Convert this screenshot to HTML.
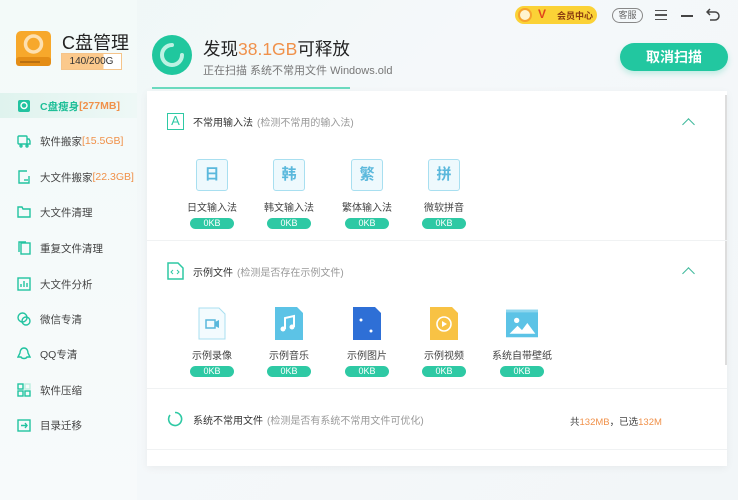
<!DOCTYPE html>
<html><head><meta charset="utf-8"><style>
*{margin:0;padding:0;box-sizing:border-box}
body{width:738px;height:500px;overflow:hidden;background:linear-gradient(135deg,#eef7f6 0%,#f5f8fa 40%,#f2f6f8 100%);font-family:"Liberation Sans","Noto Sans CJK SC",sans-serif;color:#333;position:relative}
.abs{position:absolute}
.side{left:0;top:0;width:137px;height:500px;background:linear-gradient(180deg,#f3faf9,#f7fafb)}
.nav{position:absolute;left:17px;font-size:10.5px;color:#444;display:flex;align-items:center;height:20px}
.nav svg{width:14px;height:14px;margin-right:9px}
.or{color:#f0914a}
.card{left:147px;top:91px;width:580px;height:375px;background:#fff;box-shadow:0 2px 8px rgba(0,0,0,.05)}
.sh{position:absolute;left:20px;display:flex;align-items:center;font-size:10px;color:#333}
.sh .g{color:#999;margin-left:4px}
.chev{position:absolute;left:537px;width:9px;height:9px;border-left:1.6px solid #3db89a;border-top:1.6px solid #3db89a;transform:rotate(45deg)}
.it{position:absolute;width:80px;text-align:center;font-size:10px;color:#444}
.it .ic{margin:0 auto;width:32px;height:34px;display:flex;align-items:center;justify-content:center}
.it .lb{margin-top:10px;height:14px;line-height:14px}
.pill{margin:2px auto 0;width:44px;height:11px;border-radius:6px;background:#2ec9a4;color:#fff;font-size:9px;line-height:11px}
.box{width:32px;height:32px;border:1.5px solid #a8dff0;background:#eef9fd;border-radius:3px;color:#5ab8dc;font-size:15px;font-weight:bold;line-height:29px;text-align:center}
.div{position:absolute;left:0;width:580px;height:1px;background:#f0f2f3}
</style></head><body>
<div class="abs side"></div>
<!-- logo -->
<svg class="abs" style="left:14px;top:29px" width="40" height="40" viewBox="0 0 40 40"><rect x="2" y="2" width="35" height="35" rx="5" fill="#f7a82b"/><rect x="2" y="28" width="35" height="9" rx="3" fill="#e48d16"/><rect x="6" y="32" width="20" height="2" fill="#b96f10"/><circle cx="19.5" cy="15" r="8" fill="none" stroke="#fde0b0" stroke-width="3.5"/></svg>
<div class="abs" style="left:62px;top:29px;font-size:18px;color:#222">C盘管理</div>
<div class="abs" style="left:61px;top:53px;width:61px;height:17px;border:1px solid #f5c48a;background:linear-gradient(90deg,#fbc98c 0 70%,#fff 70%);font-size:10px;line-height:15px;text-align:center;color:#333">140/200G</div>
<!-- spinner -->
<svg class="abs" style="left:151px;top:34px" width="42" height="42" viewBox="0 0 42 42"><circle cx="21" cy="21" r="20" fill="#20c79e"/><path d="M21 11 A10 10 0 1 0 31 21" fill="none" stroke="#bdf2e3" stroke-width="4" stroke-linecap="round"/></svg>
<div class="abs" style="left:203px;top:36px;font-size:17.5px;color:#222">发现<span class="or">38.1GB</span>可释放</div>
<div class="abs" style="left:203px;top:62px;font-size:11px;color:#777">正在扫描 系统不常用文件 Windows.old</div>
<div class="abs" style="left:152px;top:87px;width:198px;height:2px;background:#6cdbc0"></div>
<!-- top right -->
<div class="abs" style="left:515px;top:6px;width:82px;height:18px;border-radius:9px;background:#fbd236"></div>
<div class="abs" style="left:518px;top:8px;width:14px;height:14px;border-radius:7px;background:#fff4d0;border:2px solid #f6a32b"></div>
<div class="abs" style="left:538px;top:7px;font-size:12px;font-weight:bold;color:#e0451c">V</div>
<div class="abs" style="left:557px;top:9px;font-size:9px;font-weight:bold;color:#8a3a10">会员中心</div>
<div class="abs" style="left:612px;top:8px;width:31px;height:15px;border:1px solid #888;border-radius:8px;font-size:9px;line-height:13px;text-align:center;color:#666">客服</div>
<div class="abs" style="left:655px;top:10px;width:12px;height:10px;border-top:1.5px solid #555;border-bottom:1.5px solid #555"><div style="margin-top:3px;height:1.5px;background:#555"></div></div>
<div class="abs" style="left:681px;top:15px;width:12px;height:1.5px;background:#444"></div>
<svg class="abs" style="left:706px;top:8px" width="14" height="13" viewBox="0 0 14 13"><path d="M4 1 L1 4 L4 7 M1 4 H9 A4 4 0 0 1 9 12 H4" fill="none" stroke="#444" stroke-width="1.5"/></svg>
<div class="abs" style="left:620px;top:43px;width:108px;height:28px;border-radius:14px;background:#22c7a0;color:#fff;font-size:14px;font-weight:bold;text-align:center;line-height:28px;box-shadow:0 3px 6px rgba(34,199,160,.25)">取消扫描</div>
<!-- sidebar -->
<div class="abs" style="left:0;top:93px;width:137px;height:25px;background:linear-gradient(90deg,#dff3ee,#eef8f6)"></div>
<div class="nav" style="top:96px;color:#1fbf98;font-weight:bold"><svg viewBox="0 0 14 14"><rect x="1" y="1" width="12" height="12" rx="2" fill="#22c3a0"/><circle cx="7" cy="6.5" r="3" fill="none" stroke="#fff" stroke-width="1.4"/></svg>C盘瘦身<span class="or">[277MB]</span></div>
<div class="nav" style="top:131px"><svg viewBox="0 0 14 14" fill="none" stroke="#22c3a0" stroke-width="1.4"><rect x="1" y="2" width="9" height="8" rx="1"/><path d="M10 5h2l1 2v3h-3"/><circle cx="4" cy="12" r="1"/><circle cx="10" cy="12" r="1"/></svg>软件搬家<span class="or">[15.5GB]</span></div>
<div class="nav" style="top:167px"><svg viewBox="0 0 14 14" fill="none" stroke="#22c3a0" stroke-width="1.4"><path d="M10 1H2v12h10V6"/><path d="M7 10h4"/></svg>大文件搬家<span class="or">[22.3GB]</span></div>
<div class="nav" style="top:202px"><svg viewBox="0 0 14 14" fill="none" stroke="#22c3a0" stroke-width="1.4"><path d="M1 2h4l1 2h7v8H1z"/></svg>大文件清理</div>
<div class="nav" style="top:238px"><svg viewBox="0 0 14 14" fill="none" stroke="#22c3a0" stroke-width="1.4"><rect x="4" y="2" width="9" height="11"/><path d="M2 11V1h7"/></svg>重复文件清理</div>
<div class="nav" style="top:274px"><svg viewBox="0 0 14 14" fill="none" stroke="#22c3a0" stroke-width="1.4"><rect x="1" y="1" width="12" height="12"/><path d="M4 10V7M7 10V4M10 10V6"/></svg>大文件分析</div>
<div class="nav" style="top:309px"><svg viewBox="0 0 14 14" fill="none" stroke="#22c3a0" stroke-width="1.4"><circle cx="5.5" cy="5.5" r="4.5"/><circle cx="9" cy="9" r="4"/></svg>微信专清</div>
<div class="nav" style="top:344px"><svg viewBox="0 0 14 14" fill="none" stroke="#22c3a0" stroke-width="1.4"><path d="M7 1C4 1 3 4 3 6L1 10h3c1 2 5 2 6 0h3L11 6c0-2-1-5-4-5z"/></svg>QQ专清</div>
<div class="nav" style="top:380px"><svg viewBox="0 0 14 14" fill="none" stroke="#22c3a0" stroke-width="1.4"><rect x="1" y="1" width="5" height="5"/><rect x="8" y="1" width="5" height="5" stroke="#bdeee0"/><rect x="1" y="8" width="5" height="5"/><rect x="8" y="8" width="5" height="5"/></svg>软件压缩</div>
<div class="nav" style="top:415px"><svg viewBox="0 0 14 14" fill="none" stroke="#22c3a0" stroke-width="1.4"><rect x="1" y="2" width="12" height="11"/><path d="M4 7.5h6M8 5l2 2.5L8 10"/></svg>目录迁移</div>
<!-- card -->
<div class="abs card">
<div style="position:absolute;left:578px;top:4px;width:2px;height:270px;background:#ddd"></div>
<div class="sh" style="top:22px"><div style="width:17px;height:17px;border:1.5px solid #2ec9a4;color:#2ec9a4;font-size:13px;line-height:14px;text-align:center;margin-right:9px">A</div>不常用输入法<span class="g">(检测不常用的输入法)</span></div>
<div class="chev" style="top:29px"></div>
<div class="it" style="left:25px;top:67px"><div class="ic"><div class="box">日</div></div><div class="lb">日文输入法</div><div class="pill">0KB</div></div>
<div class="it" style="left:102px;top:67px"><div class="ic"><div class="box">韩</div></div><div class="lb">韩文输入法</div><div class="pill">0KB</div></div>
<div class="it" style="left:180px;top:67px"><div class="ic"><div class="box">繁</div></div><div class="lb">繁体输入法</div><div class="pill">0KB</div></div>
<div class="it" style="left:257px;top:67px"><div class="ic"><div class="box">拼</div></div><div class="lb">微软拼音</div><div class="pill">0KB</div></div>
<div class="div" style="top:149px"></div>
<div class="sh" style="top:171px"><svg width="17" height="18" viewBox="0 0 17 18" style="margin-right:9px" fill="none" stroke="#2ec9a4" stroke-width="1.5"><path d="M1 1h10l5 5v11H1z"/><path d="M6 8l-2 2 2 2M10 8l2 2-2 2" stroke-width="1"/></svg>示例文件<span class="g">(检测是否存在示例文件)</span></div>
<div class="chev" style="top:178px"></div>
<div class="it" style="left:25px;top:215px"><div class="ic"><svg width="28" height="33" viewBox="0 0 28 33"><path d="M1 1h20l6 6v25H1z" fill="#f3fbfe" stroke="#a8dff0"/><rect x="8" y="13" width="9" height="8" fill="none" stroke="#5ab8dc" stroke-width="1.5"/><path d="M17 15l4-2v8l-4-2z" fill="#5ab8dc"/></svg></div><div class="lb">示例录像</div><div class="pill">0KB</div></div>
<div class="it" style="left:102px;top:215px"><div class="ic"><svg width="28" height="33" viewBox="0 0 28 33"><path d="M0 0h22l6 6v27H0z" fill="#5cc3e6"/><path d="M10 22V11l9-2v11" fill="none" stroke="#fff" stroke-width="2"/><circle cx="8" cy="22" r="2.5" fill="#fff"/><circle cx="17" cy="20" r="2.5" fill="#fff"/></svg></div><div class="lb">示例音乐</div><div class="pill">0KB</div></div>
<div class="it" style="left:180px;top:215px"><div class="ic"><svg width="28" height="33" viewBox="0 0 28 33"><path d="M0 0h22l6 6v27H0z" fill="#2e6fd6"/><circle cx="8" cy="13" r="1.5" fill="#fff"/><circle cx="18" cy="24" r="1.5" fill="#fff"/></svg></div><div class="lb">示例图片</div><div class="pill">0KB</div></div>
<div class="it" style="left:257px;top:215px"><div class="ic"><svg width="28" height="33" viewBox="0 0 28 33"><path d="M0 0h22l6 6v27H0z" fill="#f8c244"/><circle cx="14" cy="17" r="7" fill="none" stroke="#fff" stroke-width="1.6"/><path d="M12 14v6l5-3z" fill="#fff"/></svg></div><div class="lb">示例视频</div><div class="pill">0KB</div></div>
<div class="it" style="left:335px;top:215px"><div class="ic"><svg width="36" height="31" viewBox="0 0 36 31"><rect width="36" height="31" fill="#5cc3e6"/><rect y="0" width="36" height="3" fill="#8dd6ee"/><circle cx="12" cy="12" r="3" fill="#fff"/><path d="M4 27l9-9 5 5 6-8 9 12z" fill="#fff"/></svg></div><div class="lb">系统自带壁纸</div><div class="pill">0KB</div></div>
<div class="div" style="top:297px"></div>
<div class="sh" style="top:320px"><svg width="16" height="16" viewBox="0 0 16 16" style="margin-right:10px"><path d="M8 1.5A6.5 6.5 0 1 1 3 4" fill="none" stroke="#2ec9a4" stroke-width="1.6"/></svg>系统不常用文件<span class="g">(检测是否有系统不常用文件可优化)</span></div>
<div style="position:absolute;left:423px;top:323px;font-size:9.5px;color:#444">共<span class="or">132MB</span>，已选<span class="or">132M</span></div>
<div class="div" style="top:358px"></div>
</div>
</body></html>
